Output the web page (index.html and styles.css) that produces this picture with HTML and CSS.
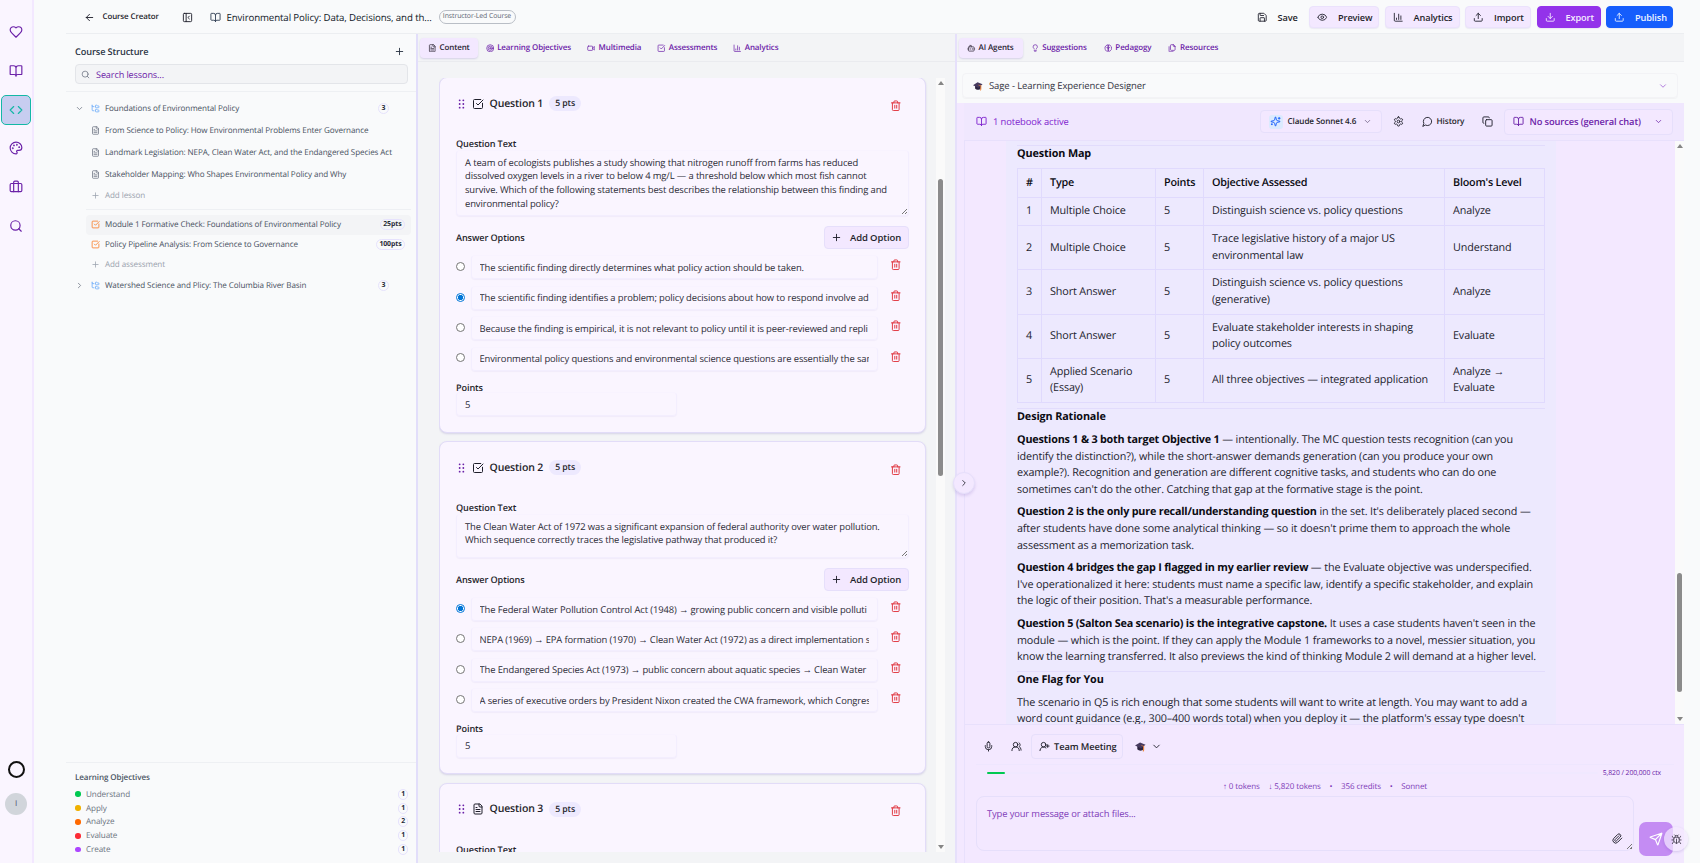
FILE: index.html
```
<!DOCTYPE html>
<html lang="en">
<head>
  <meta charset="UTF-8">
  <title>Course Creator</title>
  <link rel="stylesheet" href="styles.css">
</head>
<body>
  <!-- icon set -->
  <svg class="sprite" aria-hidden="true">
    <symbol id="heart" viewBox="0 0 24 24"><path d="M19 14c1.49-1.46 3-3.21 3-5.5A5.5 5.5 0 0 0 16.5 3c-1.76 0-3 .5-4.5 2-1.5-1.5-2.74-2-4.5-2A5.5 5.5 0 0 0 2 8.500c0 2.300 1.500 4.050 3 5.500l7 7Z"/></symbol>
    <symbol id="book" viewBox="0 0 24 24"><path d="M12 7v14M3 18a1 1 0 0 1-1-1V4a1 1 0 0 1 1-1h5a4 4 0 0 1 4 4 4 4 0 0 1 4-4h5a1 1 0 0 1 1 1v13a1 1 0 0 1-1 1h-6a3 3 0 0 0-3 3 3 3 0 0 0-3-3z"/></symbol>
    <symbol id="code" viewBox="0 0 24 24"><path d="m16 18 6-6-6-6M8 6l-6 6 6 6"/></symbol>
    <symbol id="palette" viewBox="0 0 24 24"><path d="M12 22a1 1 0 0 1 0-20 10 9 0 0 1 10 9 5 5 0 0 1-5 5h-2.250a1.750 1.750 0 0 0-1.400 2.800l.3.400a1.750 1.750 0 0 1-1.400 2.800z"/><circle cx="13.500" cy="6.500" r=".6"/><circle cx="17.500" cy="10.500" r=".6"/><circle cx="6.500" cy="12.500" r=".6"/><circle cx="8.500" cy="7.500" r=".6"/></symbol>
    <symbol id="case" viewBox="0 0 24 24"><path d="M16 20V4a2 2 0 0 0-2-2h-4a2 2 0 0 0-2 2v16"/><rect x="2" y="6" width="20" height="14" rx="2"/></symbol>
    <symbol id="search" viewBox="0 0 24 24"><circle cx="11" cy="11" r="8"/><path d="m21 21-4.300-4.300"/></symbol>
    <symbol id="back" viewBox="0 0 24 24"><path d="m12 19-7-7 7-7M19 12H5"/></symbol>
    <symbol id="panel" viewBox="0 0 24 24"><rect x="3" y="3" width="18" height="18" rx="2"/><path d="M9 3v18m7-6-3-3 3-3"/></symbol>
    <symbol id="plus" viewBox="0 0 24 24"><path d="M5 12h14M12 5v14"/></symbol>
    <symbol id="down" viewBox="0 0 24 24"><path d="m6 9 6 6 6-6"/></symbol>
    <symbol id="right" viewBox="0 0 24 24"><path d="m9 18 6-6-6-6"/></symbol>
    <symbol id="tree" viewBox="0 0 24 24"><path d="M20 10a1 1 0 0 0 1-1V6a1 1 0 0 0-1-1h-2.500a1 1 0 0 1-.8-.4l-.9-1.200A1 1 0 0 0 15 3h-2a1 1 0 0 0-1 1v5a1 1 0 0 0 1 1ZM20 21a1 1 0 0 0 1-1v-3a1 1 0 0 0-1-1h-2.900a1 1 0 0 1-.88-.55l-.42-.85a1 1 0 0 0-.92-.6H13a1 1 0 0 0-1 1v5a1 1 0 0 0 1 1ZM3 5a2 2 0 0 0 2 2h3M3 3v13a2 2 0 0 0 2 2h3"/></symbol>
    <symbol id="file" viewBox="0 0 24 24"><path d="M15 2H6a2 2 0 0 0-2 2v16a2 2 0 0 0 2 2h12a2 2 0 0 0 2-2V7ZM14 2v4a2 2 0 0 0 2 2h4M10 9H8M16 13H8M16 17H8"/></symbol>
    <symbol id="check" viewBox="0 0 24 24"><path d="M21 10.500V19a2 2 0 0 1-2 2H5a2 2 0 0 1-2-2V5a2 2 0 0 1 2-2h12.500M9 11l3 3L22 4"/></symbol>
    <symbol id="target" viewBox="0 0 24 24"><circle cx="12" cy="12" r="10"/><circle cx="12" cy="12" r="6"/><circle cx="12" cy="12" r="2"/></symbol>
    <symbol id="video" viewBox="0 0 24 24"><path d="m16 13 5.200 3.500a.5.500 0 0 0 .8-.4V7.900a.5.500 0 0 0-.75-.4L16 10.500"/><rect x="2" y="6" width="14" height="12" rx="2"/></symbol>
    <symbol id="chart" viewBox="0 0 24 24"><path d="M3 3v16a2 2 0 0 0 2 2h16M18 17V9M13 17V5M8 17v-3"/></symbol>
    <symbol id="grip" viewBox="0 0 24 24"><path d="M8 4h.01M8 12h.01M8 20h.01M16 4h.01M16 12h.01M16 20h.01"/></symbol>
    <symbol id="trash" viewBox="0 0 24 24"><path d="M3 6h18M19 6v14a2 2 0 0 1-2 2H7a2 2 0 0 1-2-2V6M8 6V4a2 2 0 0 1 2-2h4a2 2 0 0 1 2 2v2M10 11v6M14 11v6"/></symbol>
    <symbol id="save" viewBox="0 0 24 24"><path d="M15.200 3a2 2 0 0 1 1.400.6l3.800 3.800a2 2 0 0 1 .6 1.400V19a2 2 0 0 1-2 2H5a2 2 0 0 1-2-2V5a2 2 0 0 1 2-2zM17 21v-7a1 1 0 0 0-1-1H8a1 1 0 0 0-1 1v7M7 3v4a1 1 0 0 0 1 1h7"/></symbol>
    <symbol id="eye" viewBox="0 0 24 24"><path d="M2.060 12.350a1 1 0 0 1 0-.7 10.750 10.750 0 0 1 19.880 0 1 1 0 0 1 0 .7 10.750 10.750 0 0 1-19.880 0"/><circle cx="12" cy="12" r="3"/></symbol>
    <symbol id="upload" viewBox="0 0 24 24"><path d="M21 15v4a2 2 0 0 1-2 2H5a2 2 0 0 1-2-2v-4M17 8l-5-5-5 5M12 3v12"/></symbol>
    <symbol id="download" viewBox="0 0 24 24"><path d="M21 15v4a2 2 0 0 1-2 2H5a2 2 0 0 1-2-2v-4M7 10l5 5 5-5M12 15V3"/></symbol>
    <symbol id="bot" viewBox="0 0 24 24"><path d="M12 8V4H8M2 14h2M20 14h2M15 13v2M9 13v2"/><rect x="4" y="8" width="16" height="12" rx="2"/></symbol>
    <symbol id="bulb" viewBox="0 0 24 24"><path d="M15 14c.2-1 .7-1.700 1.500-2.500 1-.9 1.500-2.200 1.500-3.500A6 6 0 0 0 6 8c0 1 .2 2.200 1.500 3.500.7.700 1.300 1.500 1.500 2.500M9 18h6M10 22h4"/></symbol>
    <symbol id="brain" viewBox="0 0 24 24"><path d="M12 3a4 4 0 0 0-6 2.500 5 5 0 0 0-3 6.500 5 5 0 0 0 2.500 6A4 4 0 0 0 12 20ZM12 3a4 4 0 0 1 6 2.500 5 5 0 0 1 3 6.500 5 5 0 0 1-2.500 6A4 4 0 0 1 12 20ZM8 10c2 0 4 1 4 3 0-2 2-3 4-3"/></symbol>
    <symbol id="files" viewBox="0 0 24 24"><path d="M20 7h-3a2 2 0 0 1-2-2V2M9 18a2 2 0 0 1-2-2V4a2 2 0 0 1 2-2h7l4 4v10a2 2 0 0 1-2 2ZM3 7.600v12.800A1.600 1.600 0 0 0 4.600 22h9.800"/></symbol>
    <symbol id="spark" viewBox="0 0 24 24"><path d="M9.940 15.500A2 2 0 0 0 8.500 14.060l-6.140-1.580a.5.500 0 0 1 0-.96L8.500 9.940A2 2 0 0 0 9.940 8.500l1.580-6.140a.5.500 0 0 1 .96 0L14.060 8.500A2 2 0 0 0 15.500 9.940l6.140 1.580a.5.500 0 0 1 0 .96L15.500 14.060a2 2 0 0 0-1.440 1.440l-1.580 6.140a.5.500 0 0 1-.96 0zM20 3v4M22 5h-4M4 17v2M5 18H3"/></symbol>
    <symbol id="gear" viewBox="0 0 24 24"><path d="M12.220 2h-.44a2 2 0 0 0-2 2v.18a2 2 0 0 1-1 1.730l-.43.250a2 2 0 0 1-2 0l-.15-.08a2 2 0 0 0-2.730.730l-.22.380a2 2 0 0 0 .730 2.730l.15.100a2 2 0 0 1 1 1.720v.510a2 2 0 0 1-1 1.740l-.15.090a2 2 0 0 0-.730 2.730l.22.380a2 2 0 0 0 2.730.730l.15-.08a2 2 0 0 1 2 0l.43.250a2 2 0 0 1 1 1.730V20a2 2 0 0 0 2 2h.44a2 2 0 0 0 2-2v-.18a2 2 0 0 1 1-1.730l.43-.25a2 2 0 0 1 2 0l.15.080a2 2 0 0 0 2.730-.730l.22-.390a2 2 0 0 0-.730-2.730l-.15-.08a2 2 0 0 1-1-1.740v-.5a2 2 0 0 1 1-1.740l.15-.09a2 2 0 0 0 .730-2.730l-.22-.380a2 2 0 0 0-2.730-.730l-.15.080a2 2 0 0 1-2 0l-.43-.25a2 2 0 0 1-1-1.730V4a2 2 0 0 0-2-2z"/><circle cx="12" cy="12" r="3"/></symbol>
    <symbol id="bubble" viewBox="0 0 24 24"><path d="M7.900 20A9 9 0 1 0 4 16.100L2 22Z"/></symbol>
    <symbol id="copy" viewBox="0 0 24 24"><rect x="8" y="8" width="14" height="14" rx="2"/><path d="M4 16c-1.100 0-2-.9-2-2V4c0-1.100.9-2 2-2h10c1.100 0 2 .9 2 2"/></symbol>
    <symbol id="mic" viewBox="0 0 24 24"><path d="M12 2a3 3 0 0 0-3 3v7a3 3 0 0 0 6 0V5a3 3 0 0 0-3-3ZM19 10v2a7 7 0 0 1-14 0v-2M12 19v3"/></symbol>
    <symbol id="users" viewBox="0 0 24 24"><path d="M18 21a8 8 0 0 0-16 0M22 20c0-3.370-2-6.500-4-8a5 5 0 0 0-.45-8.300"/><circle cx="10" cy="8" r="5"/></symbol>
    <symbol id="useradd" viewBox="0 0 24 24"><path d="M2 21a8 8 0 0 1 13.290-6M19 8v6M22 11h-6"/><circle cx="10" cy="8" r="5"/></symbol>
    <symbol id="clip" viewBox="0 0 24 24"><path d="m21.440 11.050-9.190 9.190a6 6 0 0 1-8.490-8.490l8.570-8.570A4 4 0 1 1 18 8.840l-8.590 8.570a2 2 0 0 1-2.830-2.830l8.490-8.480"/></symbol>
    <symbol id="send" viewBox="0 0 24 24"><path d="M14.540 21.690a.5.500 0 0 0 .94-.03l6.500-19a.5.500 0 0 0-.64-.64l-19 6.500a.5.500 0 0 0-.02.940l7.930 3.180a2 2 0 0 1 1.110 1.110zM21.850 2.150l-10.940 10.940"/></symbol>
    <symbol id="bug" viewBox="0 0 24 24"><path d="m8 2 1.880 1.880M14.120 3.880 16 2M9 7.130v-1a3 3 0 1 1 6 0v1M12 20c-3.300 0-6-2.700-6-6v-3a4 4 0 0 1 4-4h4a4 4 0 0 1 4 4v3c0 3.300-2.700 6-6 6M12 20v-9M6.530 9C4.600 8.800 3 7.100 3 5M6 13H2M3 21c0-2.100 1.700-3.900 3.800-4M20.970 5c0 2.100-1.600 3.800-3.500 4M22 13h-4M17.200 17c2.100.1 3.800 1.900 3.800 4"/></symbol>
    <symbol id="cap" viewBox="0 0 24 24"><g stroke="none"><path fill="#2c2440" d="M5 11v7c3 4 11 4 14 0v-8z"/><path fill="#463a5e" d="M0 10 11 3l12 5-10 8z"/><path fill="#f0883e" d="m13 9 7 2v9l-1 3h-2l1-11-5-2z"/></g></symbol>
  </svg>

  <div class="app">
    <nav class="rail">
      <a class="rail-item"><svg><use href="#heart"/></svg></a>
      <a class="rail-item"><svg><use href="#book"/></svg></a>
      <a class="rail-item active"><svg><use href="#code"/></svg></a>
      <a class="rail-item"><svg><use href="#palette"/></svg></a>
      <a class="rail-item"><svg><use href="#case"/></svg></a>
      <a class="rail-item"><svg><use href="#search"/></svg></a>
      <span class="ring"></span>
      <span class="avatar">I</span>
    </nav>

    <main class="main">
      <header class="topbar">
        <svg class="i11"><use href="#back"/></svg>
        <span class="back-label">Course Creator</span>
        <svg class="i11 panel-icon"><use href="#panel"/></svg>
        <svg class="i11 book-icon"><use href="#book"/></svg>
        <span class="course-title">Environmental Policy: Data, Decisions, and th...</span>
        <span class="course-type">Instructor-Led Course</span>
        <div class="actions">
          <button class="btn ghost"><svg><use href="#save"/></svg>Save</button>
          <button class="btn preview"><svg><use href="#eye"/></svg>Preview</button>
          <button class="btn stats"><svg><use href="#chart"/></svg>Analytics</button>
          <button class="btn import"><svg><use href="#upload"/></svg>Import</button>
          <button class="btn export"><svg><use href="#download"/></svg>Export</button>
          <button class="btn publish"><svg><use href="#upload"/></svg>Publish</button>
        </div>
      </header>

      <div class="columns">
        <!-- course structure -->
        <aside class="structure">
          <div class="structure-head">
            <div class="structure-title">Course Structure <svg class="i11"><use href="#plus"/></svg></div>
            <div class="search"><svg><use href="#search"/></svg>Search lessons...</div>
          </div>
          <div class="tree">
            <div class="node module"><svg class="chev"><use href="#down"/></svg><svg class="blue"><use href="#tree"/></svg><span>Foundations of Environmental Policy</span><b class="pill">3</b></div>
            <div class="node lesson"><svg><use href="#file"/></svg><span>From Science to Policy: How Environmental Problems Enter Governance</span></div>
            <div class="node lesson"><svg><use href="#file"/></svg><span>Landmark Legislation: NEPA, Clean Water Act, and the Endangered Species Act</span></div>
            <div class="node lesson"><svg><use href="#file"/></svg><span>Stakeholder Mapping: Who Shapes Environmental Policy and Why</span></div>
            <div class="node add"><svg><use href="#plus"/></svg><span>Add lesson</span></div>
            <div class="tests">
              <div class="node test selected"><svg class="orange"><use href="#check"/></svg><span>Module 1 Formative Check: Foundations of Environmental Policy</span><b class="pill">25pts</b></div>
              <div class="node test"><svg class="orange"><use href="#check"/></svg><span>Policy Pipeline Analysis: From Science to Governance</span><b class="pill">100pts</b></div>
              <div class="node add"><svg><use href="#plus"/></svg><span>Add assessment</span></div>
            </div>
            <div class="node module"><svg class="chev"><use href="#right"/></svg><svg class="blue"><use href="#tree"/></svg><span>Watershed Science and Plicy: The Columbia River Basin</span><b class="pill">3</b></div>
          </div>
          <div class="objectives">
            <h4>Learning Objectives</h4>
            <div class="objective"><i class="dot green"></i>Understand<b class="pill">1</b></div>
            <div class="objective"><i class="dot yellow"></i>Apply<b class="pill">1</b></div>
            <div class="objective"><i class="dot amber"></i>Analyze<b class="pill">2</b></div>
            <div class="objective"><i class="dot red"></i>Evaluate<b class="pill">1</b></div>
            <div class="objective"><i class="dot violet"></i>Create<b class="pill">1</b></div>
          </div>
        </aside>

        <!-- assessment editor -->
        <section class="editor">
          <div class="tabs">
            <span class="tab active"><svg><use href="#file"/></svg>Content</span>
            <span class="tab"><svg><use href="#target"/></svg>Learning Objectives</span>
            <span class="tab"><svg><use href="#video"/></svg>Multimedia</span>
            <span class="tab"><svg><use href="#check"/></svg>Assessments</span>
            <span class="tab"><svg><use href="#chart"/></svg>Analytics</span>
          </div>
          <div class="editor-scroll">
            <div class="cards">
              <article class="card">
                <div class="card-head"><svg class="grip"><use href="#grip"/></svg><svg class="kind"><use href="#check"/></svg><h3>Question 1</h3><span class="pts">5 pts</span><svg class="trash"><use href="#trash"/></svg></div>
                <label>Question Text</label>
                <div class="field area">A team of ecologists publishes a study showing that nitrogen runoff from farms has reduced<br>dissolved oxygen levels in a river to below 4 mg/L — a threshold below which most fish cannot<br>survive. Which of the following statements best describes the relationship between this finding and<br>environmental policy?<i class="grab"></i></div>
                <div class="options-head"><label>Answer Options</label><button class="add-option"><svg><use href="#plus"/></svg>Add Option</button></div>
                <div class="option"><i class="radio"></i><div class="field"><p>The scientific finding directly determines what policy action should be taken.</p></div><svg class="trash"><use href="#trash"/></svg></div>
                <div class="option"><i class="radio on"></i><div class="field"><p>The scientific finding identifies a problem; policy decisions about how to respond involve ad</p></div><svg class="trash"><use href="#trash"/></svg></div>
                <div class="option"><i class="radio"></i><div class="field"><p>Because the finding is empirical, it is not relevant to policy until it is peer-reviewed and repli</p></div><svg class="trash"><use href="#trash"/></svg></div>
                <div class="option"><i class="radio"></i><div class="field"><p>Environmental policy questions and environmental science questions are essentially the sam</p></div><svg class="trash"><use href="#trash"/></svg></div>
                <label class="points-label">Points</label>
                <div class="field points">5</div>
              </article>

              <article class="card">
                <div class="card-head"><svg class="grip"><use href="#grip"/></svg><svg class="kind"><use href="#check"/></svg><h3>Question 2</h3><span class="pts">5 pts</span><svg class="trash"><use href="#trash"/></svg></div>
                <label>Question Text</label>
                <div class="field area">The Clean Water Act of 1972 was a significant expansion of federal authority over water pollution.<br>Which sequence correctly traces the legislative pathway that produced it?<i class="grab"></i></div>
                <div class="options-head"><label>Answer Options</label><button class="add-option"><svg><use href="#plus"/></svg>Add Option</button></div>
                <div class="option"><i class="radio on"></i><div class="field"><p>The Federal Water Pollution Control Act (1948) → growing public concern and visible polluti</p></div><svg class="trash"><use href="#trash"/></svg></div>
                <div class="option"><i class="radio"></i><div class="field"><p>NEPA (1969) → EPA formation (1970) → Clean Water Act (1972) as a direct implementation s</p></div><svg class="trash"><use href="#trash"/></svg></div>
                <div class="option"><i class="radio"></i><div class="field"><p>The Endangered Species Act (1973) → public concern about aquatic species → Clean Water</p></div><svg class="trash"><use href="#trash"/></svg></div>
                <div class="option"><i class="radio"></i><div class="field"><p>A series of executive orders by President Nixon created the CWA framework, which Congres</p></div><svg class="trash"><use href="#trash"/></svg></div>
                <label class="points-label">Points</label>
                <div class="field points">5</div>
              </article>

              <article class="card">
                <div class="card-head"><svg class="grip"><use href="#grip"/></svg><svg class="kind"><use href="#file"/></svg><h3>Question 3</h3><span class="pts">5 pts</span><svg class="trash"><use href="#trash"/></svg></div>
                <label>Question Text</label>
                <div class="field area"></div>
              </article>
            </div>
            <div class="scrollbar"><i class="up"></i><i class="thumb"></i><i class="dn"></i></div>
          </div>
        </section>

        <!-- AI panel -->
        <section class="assistant">
          <div class="tabs">
            <span class="tab active"><svg><use href="#bot"/></svg>AI Agents</span>
            <span class="tab"><svg><use href="#bulb"/></svg>Suggestions</span>
            <span class="tab"><svg><use href="#brain"/></svg>Pedagogy</span>
            <span class="tab"><svg><use href="#files"/></svg>Resources</span>
          </div>
          <div class="agent-row">
            <div class="agent"><svg><use href="#cap"/></svg>Sage - Learning Experience Designer<svg class="end"><use href="#down"/></svg></div>
          </div>
          <div class="chat">
            <div class="chat-head">
              <svg class="i11 nb-icon"><use href="#book"/></svg><span class="notebook">1 notebook active</span>
              <div class="model"><span class="spark"><svg><use href="#spark"/></svg></span>Claude Sonnet 4.6<svg><use href="#down"/></svg></div>
              <svg class="i11 gear"><use href="#gear"/></svg>
              <span class="history"><svg class="i11"><use href="#bubble"/></svg>History</span>
              <svg class="i11 copy"><use href="#copy"/></svg>
              <div class="sources"><svg class="i11"><use href="#book"/></svg>No sources (general chat)<svg class="end"><use href="#down"/></svg></div>
            </div>
            <div class="messages">
              <div class="message">
                <hr>
                <h3>Question Map</h3>
                <table>
                  <tr><th class="c1">#</th><th class="c2">Type</th><th class="c3">Points</th><th class="c4">Objective Assessed</th><th>Bloom's Level</th></tr>
                  <tr><td>1</td><td>Multiple Choice</td><td>5</td><td>Distinguish science vs. policy questions</td><td>Analyze</td></tr>
                  <tr><td>2</td><td>Multiple Choice</td><td>5</td><td>Trace legislative history of a major US<br>environmental law</td><td>Understand</td></tr>
                  <tr><td>3</td><td>Short Answer</td><td>5</td><td>Distinguish science vs. policy questions<br>(generative)</td><td>Analyze</td></tr>
                  <tr><td>4</td><td>Short Answer</td><td>5</td><td>Evaluate stakeholder interests in shaping<br>policy outcomes</td><td>Evaluate</td></tr>
                  <tr><td>5</td><td>Applied Scenario<br>(Essay)</td><td>5</td><td>All three objectives — integrated application</td><td>Analyze →<br>Evaluate</td></tr>
                </table>
                <hr>
                <h3>Design Rationale</h3>
                <p><b>Questions 1 &amp; 3 both target Objective 1</b> — intentionally. The MC question tests recognition (can you<br>identify the distinction?), while the short-answer demands generation (can you produce your own<br>example?). Recognition and generation are different cognitive tasks, and students who can do one<br>sometimes can't do the other. Catching that gap at the formative stage is the point.</p>
                <p><b>Question 2 is the only pure recall/understanding question</b> in the set. It's deliberately placed second —<br>after students have done some analytical thinking — so it doesn't prime them to approach the whole<br>assessment as a memorization task.</p>
                <p><b>Question 4 bridges the gap I flagged in my earlier review</b> — the Evaluate objective was underspecified.<br>I've operationalized it here: students must name a specific law, identify a specific stakeholder, and explain<br>the logic of their position. That's a measurable performance.</p>
                <p><b>Question 5 (Salton Sea scenario) is the integrative capstone.</b> It uses a case students haven't seen in the<br>module — which is the point. If they can apply the Module 1 frameworks to a novel, messier situation, you<br>know the learning transferred. It also previews the kind of thinking Module 2 will demand at a higher level.</p>
                <hr>
                <h3>One Flag for You</h3>
                <p>The scenario in Q5 is rich enough that some students will want to write at length. You may want to add a<br>word count guidance (e.g., 300–400 words total) when you deploy it — the platform's essay type doesn't</p>
              </div>
              <div class="scrollbar"><i class="up"></i><i class="thumb"></i><i class="dn"></i></div>
            </div>
            <div class="composer">
              <div class="tools">
                <svg class="i11"><use href="#mic"/></svg>
                <svg class="i11"><use href="#users"/></svg>
                <span class="team"><svg class="i11"><use href="#useradd"/></svg>Team Meeting</span>
                <svg class="i11 cap"><use href="#cap"/></svg>
                <svg class="i11 tools-chev"><use href="#down"/></svg>
              </div>
              <div class="usage"><div class="meter"><i></i></div><span>5,820 / 200,000 ctx</span></div>
              <div class="tokens"><span>↑ 0 tokens</span><span>↓ 5,820 tokens</span><span>•</span><span>356 credits</span><span>•</span><span>Sonnet</span></div>
              <div class="input-row">
                <div class="prompt">Type your message or attach files...<svg><use href="#clip"/></svg><i class="grab"></i></div>
                <button class="send"><svg><use href="#send"/></svg></button>
              </div>
            </div>
            <span class="collapse"><svg><use href="#right"/></svg></span>
          </div>
        </section>
      </div>
    </main>
    <span class="bug"><svg><use href="#bug"/></svg></span>
  </div>
</body>
</html>
```
FILE: styles.css
```
* {
  box-sizing: border-box;
  letter-spacing: -0.012em;
}
body {
  margin: 0;
  font-family: "Open Sans", "Noto Sans", sans-serif;
  font-size: 9.3px;
  color: #1f1f2b;
  background: #f9fafb;
  text-rendering: geometricPrecision;
  overflow: hidden;
}
h3, h4, p {
  margin: 0;
}
button {
  font-family: inherit;
}
svg {
  flex: none;
  display: block;
  fill: none;
  stroke: currentColor;
  stroke-width: 2;
  stroke-linecap: round;
  stroke-linejoin: round;
}
.sprite {
  position: absolute;
  width: 0;
  height: 0;
}
.i11 {
  width: 11px;
  height: 11px;
}

.app {
  position: relative;
  display: flex;
  height: 863px;
}

/* Left rail */
.rail {
  width: 34px;
  flex: none;
  display: flex;
  flex-direction: column;
  align-items: center;
  padding: 17px 0 48px;
  background: #faf5ff;
  border-right: 2px solid #f3e8ff;
  color: #6b21a8;
}
.rail-item {
  width: 30px;
  height: 30px;
  margin-bottom: 8.800px;
  display: flex;
  align-items: center;
  justify-content: center;
}
.rail-item svg {
  width: 14px;
  height: 14px;
}
.rail-item.active {
  background: #c7cdf0;
  border: 1.5px solid #14b8a6;
  border-radius: 5px;
  color: #14b8a6;
}
.ring {
  width: 17px;
  height: 17px;
  margin-top: auto;
  border: 2px solid #111;
  border-radius: 50%;
}
.avatar {
  width: 22px;
  height: 22px;
  margin-top: 15px;
  border-radius: 50%;
  background: #d1d5db;
  color: #4c4a6b;
  font-size: 8px;
  text-align: center;
  line-height: 22px;
}

.main {
  width: 1618px;
  margin-left: 32px;
  display: flex;
  flex-direction: column;
}

/* Top bar */
.topbar {
  height: 34px;
  flex: none;
  display: flex;
  align-items: center;
  padding: 1px 11px 0 18px;
  border-bottom: 1px solid #eceef1;
}
.back-label {
  width: 56px;
  margin-left: 7.500px;
  font-size: 7.900px;
  font-weight: 600;
  white-space: nowrap;
}
.panel-icon {
  margin-left: 23.500px;
}
.book-icon {
  margin-left: 16.500px;
  color: #334155;
}
.course-title {
  width: 206px;
  margin-left: 6px;
  font-size: 9.700px;
  font-weight: 500;
  color: #111827;
  white-space: nowrap;
}
.course-type {
  width: 77px;
  height: 14px;
  margin-left: 6px;
  border: 1px solid #b9bec6;
  border-radius: 7px;
  font-size: 6.900px;
  font-weight: 500;
  line-height: 12.500px;
  text-align: center;
  color: #5b6472;
  white-space: nowrap;
}
.actions {
  margin-left: auto;
  display: flex;
  gap: 5.500px;
}
.btn {
  height: 22px;
  display: flex;
  align-items: center;
  gap: 10.500px;
  padding: 0 0 0 7px;
  border: 1px solid #ebe2fc;
  border-radius: 4px;
  background: #f3e8ff;
  box-shadow: 0 1px 1px rgba(80, 50, 160, 0.08);
  font-size: 9.200px;
  font-weight: 600;
  color: #1f1f2b;
  white-space: nowrap;
}
.btn svg {
  width: 10.500px;
  height: 10.500px;
}
.btn.ghost {
  width: 55px;
  border-color: transparent;
  background: none;
  box-shadow: none;
}
.btn.preview { width: 70px; }
.btn.stats { width: 75px; }
.btn.import { width: 66px; }
.btn.export {
  width: 64px;
  background: #9333ea;
  border-color: #9333ea;
  color: #f5ecff;
}
.btn.publish {
  width: 67px;
  background: #155dfc;
  border-color: #155dfc;
  color: #eef4ff;
}

.columns {
  flex: 1;
  min-height: 0;
  display: flex;
}

/* Course structure */
.structure {
  width: 352px;
  flex: none;
  display: flex;
  flex-direction: column;
  border-right: 2px solid #e2defa;
}
.structure-head {
  height: 58px;
  flex: none;
  padding: 9px 8px 0 9px;
  border-bottom: 1px solid #eef0f3;
}
.structure-title {
  height: 16px;
  display: flex;
  align-items: center;
  justify-content: space-between;
  padding-right: 3.500px;
  font-size: 9.200px;
  font-weight: 600;
  color: #2b3444;
}
.search {
  height: 20px;
  margin-top: 5px;
  display: flex;
  align-items: center;
  gap: 6px;
  padding-left: 5px;
  border: 1px solid #e3e5e9;
  border-radius: 4px;
  background: #f3f4f6;
  font-size: 9.100px;
  color: #6b21a8;
}
.search svg {
  width: 9px;
  height: 9px;
  color: #6b7280;
}
.tree {
  flex: 1;
  padding: 5px 5px 0 8px;
}
.node {
  height: 22px;
  display: flex;
  align-items: center;
  font-size: 8.080px;
  color: #475060;
  white-space: nowrap;
}
.node svg {
  width: 9px;
  height: 9px;
  color: #6b7280;
}
.node span {
  margin-left: 5px;
}
.node .chev {
  width: 9px;
  height: 9px;
  margin: 0 7.500px 0 .5px;
}
.node .blue { color: #60a5fa; }
.node .orange { color: #f97316; }
.node.lesson {
  padding-left: 17px;
}
.node.add {
  height: 20px;
  padding-left: 17px;
  color: #9aa1ad;
}
.node.add svg {
  color: #9aa1ad;
}
.node.module .pill {
  margin-left: auto;
  margin-right: 22px;
}
.pill {
  min-width: 11px;
  height: 11px;
  padding: 0 2px;
  border: 1px solid #e6e2fd;
  border-radius: 6px;
  font-size: 6.900px;
  font-weight: 700;
  line-height: 9px;
  text-align: center;
  color: #1f2937;
}
.tests {
  margin: 4px 0 0 12px;
  padding-top: 5px;
  border-top: 1px solid #eef0f3;
}
.node.test {
  height: 19.500px;
  padding: 0 6px 0 5px;
  border-radius: 4px;
}
.node.test .pill {
  margin-left: auto;
  padding: 0 2.500px;
}
.node.selected {
  background: #f3f4f6;
}
.tests .add {
  height: 21px;
  margin-bottom: -1px;
  padding-left: 5px;
}
.objectives {
  height: 101px;
  padding: 8px 8px 0 9px;
  border-top: 1px solid #eef0f3;
}
.objectives h4 {
  height: 16.300px;
  font-size: 8.050px;
  font-weight: 600;
  line-height: 14px;
  color: #4b5563;
}
.objective {
  height: 13.850px;
  display: flex;
  align-items: center;
  font-size: 8.150px;
  color: #6b7280;
}
.objective .pill {
  margin-left: auto;
  min-width: 9.500px;
}
.dot {
  width: 5.500px;
  height: 5.500px;
  margin-right: 5.500px;
  border-radius: 50%;
}
.green { background: #00c951; }
.yellow { background: #f0b100; }
.amber { background: #ff6900; }
.red { background: #fb2c36; }
.violet { background: #ad46ff; }

/* Tabs */
.tabs {
  height: 28px;
  flex: none;
  display: flex;
  align-items: center;
  padding: 1px 2px 0;
  border-bottom: 1px solid #eaebef;
  background: #f3f4f6;
}
.tab {
  height: 20px;
  display: flex;
  align-items: center;
  gap: 3px;
  padding: 0 8px;
  border-radius: 4px;
  font-size: 7.950px;
  font-weight: 600;
  color: #6b21a8;
  white-space: nowrap;
}
.tab svg {
  width: 8.500px;
  height: 8.500px;
}
.assistant .tab {
  padding-right: 9px;
}
.tab.active {
  background: #f3e8ff;
  box-shadow: 0 1px 2px rgba(80, 50, 160, 0.18);
  color: #2a2433;
}

/* Editor */
.editor {
  width: 537px;
  flex: none;
  display: flex;
  flex-direction: column;
  background: #f3f4f6;
}
.editor-scroll {
  height: 774px;
  margin: 16px 10px 0 21px;
  display: flex;
  justify-content: space-between;
  overflow: hidden;
}
.cards {
  width: 487px;
  margin-top: -1px;
}
.card {
  padding: 17px 16px 15.500px;
  margin-bottom: 8.500px;
  border: 1px solid #e2dcf8;
  border-radius: 8px;
  background: #faf5ff;
  box-shadow: 0 1px 2px rgba(80, 60, 160, 0.18);
}
.card-head {
  height: 17px;
  margin-bottom: 25px;
  display: flex;
  align-items: center;
}
.card-head .grip {
  width: 11px;
  height: 12px;
  color: #6b21a8;
  stroke-width: 4;
}
.card-head .kind {
  width: 12px;
  height: 12px;
  margin: 0 5.500px 0 5px;
}
.card-head h3 {
  font-size: 10.500px;
  font-weight: 600;
}
.pts {
  height: 15px;
  margin-left: 6px;
  padding: 0 6px;
  border-radius: 8px;
  background: #ede9fe;
  font-size: 8.700px;
  font-weight: 600;
  line-height: 15px;
}
.trash {
  width: 11.500px;
  height: 11.500px;
  color: #e0323c;
}
.card-head .trash {
  margin: 4px 7.500px 0 auto;
}
label {
  display: block;
  height: 13px;
  font-size: 9.150px;
  font-weight: 600;
  line-height: 13px;
}
.field {
  border: 1px solid #f3eefe;
  border-top-color: #f8f3ff;
  border-radius: 4px;
  box-shadow: 0 1px 1px rgba(80, 60, 160, 0.05);
  font-size: 9.420px;
  line-height: 13.850px;
  color: #2b2b36;
  white-space: nowrap;
}
.area {
  position: relative;
  min-height: 44px;
  padding: 4.500px 8px 4.500px;
}
.grab {
  position: absolute;
  right: 1px;
  bottom: 1px;
  width: 5px;
  height: 5px;
  background: linear-gradient(135deg, transparent 45%, #777 45% 58%, transparent 58% 75%, #777 75% 90%, transparent 90%);
}
.options-head {
  height: 23px;
  margin: 10px 0 6px;
  display: flex;
  align-items: center;
  justify-content: space-between;
}
.add-option {
  width: 85px;
  height: 23px;
  display: flex;
  align-items: center;
  gap: 8px;
  padding: 0 0 0 6px;
  border: 1px solid #e6dffb;
  border-radius: 4px;
  background: #f3e8ff;
  font-size: 9.500px;
  font-weight: 600;
  color: #1f1f2b;
  white-space: nowrap;
}
.add-option svg {
  width: 11px;
  height: 11px;
}
.option {
  height: 24px;
  margin-bottom: 6.400px;
  display: flex;
  align-items: center;
}
.option .field {
  width: 407px;
  height: 24px;
  margin-left: 5.500px;
  padding: 4.500px 8px;
}
.option .field p {
  overflow: hidden;
}
.option .trash {
  margin: 0 7.500px 4.500px auto;
}
.radio {
  width: 9px;
  height: 9px;
  margin-bottom: 1.500px;
  border: 1px solid #767676;
  border-radius: 50%;
  background: #fff;
}
.radio.on {
  border-color: #0075d7;
  background: radial-gradient(circle, #0075d7 0 2.400px, #fff 3px);
}
.points-label {
  margin-top: 10px;
  height: 11.500px;
}
.points {
  width: 221px;
  height: 24px;
  padding: 4.500px 8px;
}

/* Scrollbars */
.scrollbar {
  width: 9px;
  flex: none;
  display: flex;
  flex-direction: column;
  align-items: center;
  background: #fafafa;
}
.scrollbar i {
  width: 5px;
}
.scrollbar .up,
.scrollbar .dn {
  height: 0;
  width: 0;
  border: 3px solid transparent;
  border-top-width: 0;
  border-bottom: 4px solid #858585;
  margin-top: 3px;
}
.scrollbar .dn {
  border-bottom: 0;
  border-top: 4px solid #858585;
  margin: auto 0 3px;
}
.scrollbar .thumb {
  height: 297px;
  margin-top: 94px;
  border-radius: 3px;
  background: #8b8b8b;
}
.messages .thumb {
  height: 119px;
  margin-top: 425px;
}

/* Assistant */
.assistant {
  width: 729px;
  flex: none;
  display: flex;
  flex-direction: column;
  border-left: 2px solid #e6e0fb;
}
.agent-row {
  height: 41px;
  flex: none;
  padding: 11px 6px 0 5px;
}
.agent {
  height: 25px;
  display: flex;
  align-items: center;
  gap: 6.500px;
  padding: 0 9px 0 9.500px;
  border: 1px solid #f3f3f6;
  border-radius: 4px;
  box-shadow: 0 1px 1px rgba(0, 0, 0, 0.03);
  font-size: 9.500px;
  color: #33333f;
}
.agent svg {
  width: 10px;
  height: 10px;
}
.agent .end {
  margin-left: auto;
  color: #a566d8;
}
.chat {
  position: relative;
  flex: 1;
  min-height: 0;
  display: flex;
  flex-direction: column;
  border-left: 7px solid #f3e8ff;
  background: #f3e8ff;
  box-shadow: inset 1px 0 0 #e8e0fc;
}
.chat-head {
  height: 38px;
  flex: none;
  display: flex;
  align-items: center;
  padding: 0 11px 0 12px;
  border-bottom: 1px solid #e8e0fc;
  background: #f0e7fe;
  color: #1f1f2b;
}
.nb-icon,
.notebook {
  color: #7e22ce;
}
.notebook {
  margin-left: 6px;
  font-size: 9.400px;
}
.model {
  width: 122px;
  height: 23px;
  margin-left: auto;
  display: flex;
  align-items: center;
  gap: 5px;
  padding: 0 9px 0 8px;
  border: 1px solid #e6dffb;
  border-radius: 4px;
  background: #f3e8ff;
  font-size: 8.150px;
  font-weight: 600;
  white-space: nowrap;
}
.model > svg {
  width: 9px;
  height: 9px;
  margin-left: auto;
  color: #6b5c80;
}
.spark {
  width: 14px;
  height: 14px;
  padding: 1.500px;
  border-radius: 3px;
  background: #dbeafe;
  color: #155dfc;
}
.spark svg {
  width: 11px;
  height: 11px;
}
.gear {
  margin-left: 11px;
}
.history {
  width: 43px;
  margin-left: 18px;
  display: flex;
  align-items: center;
  gap: 4px;
  font-size: 8.200px;
  font-weight: 600;
}
.copy {
  margin: 0 11px 0 17.500px;
}
.sources {
  width: 169px;
  height: 26px;
  display: flex;
  align-items: center;
  gap: 5.500px;
  padding: 0 9px 0 8px;
  border: 1px solid #e6dffb;
  border-radius: 4px;
  background: #f3e8ff;
  font-size: 9.300px;
  font-weight: 600;
  color: #6b21a8;
  white-space: nowrap;
}
.sources .end {
  width: 9px;
  height: 9px;
  margin-left: auto;
}
.messages {
  height: 583px;
  flex: none;
  display: flex;
  justify-content: space-between;
  overflow: hidden;
}
.message {
  width: 550px;
  margin-left: 42px;
  padding: 4px 11px 0;
  background: #ede9fe;
  font-size: 10.800px;
  line-height: 16.600px;
  color: #24242e;
  white-space: nowrap;
}
.message hr {
  height: 1px;
  margin: 0;
  border: 0;
  background: #e2dcfc;
}
.message h3 {
  height: 17px;
  font-size: 10.820px;
  font-weight: 700;
  line-height: 16.500px;
  color: #0b0b12;
}
.message b {
  font-weight: 700;
  color: #0b0b12;
  letter-spacing: -0.019em;
}
.message p {
  margin-top: 6px;
}
.message p + hr {
  margin-top: 5px;
}
.message table {
  width: 528px;
  margin: 5px 0 5px;
  table-layout: fixed;
  border-collapse: collapse;
}
.message th,
.message td {
  height: 28.300px;
  padding: 5px 8px;
  border: 1px solid #e0dafd;
  text-align: left;
  vertical-align: middle;
}
.message th {
  height: 29px;
  font-weight: 600;
  color: #0b0b12;
  letter-spacing: -0.02em;
}
.c1 { width: 24px; }
.c2 { width: 114px; }
.c3 { width: 48px; }
.c4 { width: 241px; }

/* Composer */
.composer {
  flex: 1;
  min-height: 0;
  padding: 8.500px 10px 0 12px;
  border-top: 1px solid #e8e0fc;
}
.tools {
  height: 31px;
  display: flex;
  align-items: flex-start;
  padding-left: 7px;
  border-bottom: 1px solid #eee6fe;
}
.tools > svg {
  margin-top: 7px;
  margin-right: 17px;
}
.tools > svg + svg {
  margin-right: 9px;
}
.team {
  width: 92px;
  height: 25px;
  display: flex;
  align-items: center;
  gap: 4px;
  padding-left: 7px;
  border: 1px solid #e6dffb;
  border-radius: 4px;
  font-size: 9.300px;
  font-weight: 600;
  white-space: nowrap;
}
.tools .cap {
  margin-left: 11.500px;
  margin-right: 5px;
}
.usage {
  height: 15.500px;
  display: flex;
  align-items: center;
  gap: 5px;
  padding: 2px 13px 0 11px;
  font-size: 6.850px;
  color: #6b21a8;
}
.meter {
  flex: 1;
  height: 2px;
  border-radius: 1px;
  background: #f0e8ff;
}
.meter i {
  display: block;
  width: 18px;
  height: 2px;
  border-radius: 1px;
  background: #00c951;
}
.tokens {
  height: 13px;
  margin-bottom: 3px;
  display: flex;
  align-items: center;
  justify-content: center;
  gap: 8.700px;
  font-size: 8px;
  color: #7e3bb8;
}
.input-row {
  display: flex;
  gap: 5px;
}
.prompt {
  position: relative;
  width: 658px;
  height: 55px;
  padding: 9.500px 10px;
  border: 1px solid #e6dffb;
  border-radius: 8px;
  font-size: 9.350px;
  line-height: 14px;
  color: #7e3bb8;
}
.prompt svg {
  position: absolute;
  right: 10.500px;
  bottom: 6.500px;
  width: 11px;
  height: 11px;
  color: #1f1f2b;
}
.send {
  width: 34px;
  height: 34px;
  margin-top: 25.500px;
  padding: 0;
  display: flex;
  align-items: center;
  justify-content: center;
  border: 0;
  border-radius: 7px;
  background: #c48cf3;
  color: #fff;
}
.send svg {
  width: 14px;
  height: 14px;
}
.collapse {
  position: absolute;
  left: -11px;
  top: 369px;
  width: 22px;
  height: 22px;
  padding: 5px;
  border: 1px solid #e6dffb;
  border-radius: 50%;
  background: #f3e8ff;
  box-shadow: 0 2px 3px rgba(80, 50, 160, 0.15);
}
.collapse svg {
  width: 10px;
  height: 10px;
}
.bug {
  position: absolute;
  left: 1664px;
  top: 827px;
  width: 24px;
  height: 24px;
  padding: 6.500px;
  border-radius: 50%;
  background: rgba(243, 232, 255, 0.7);
  box-shadow: 0 1px 3px rgba(80, 50, 160, 0.2);
  color: #4a4356;
}
.bug svg {
  width: 11px;
  height: 11px;
}
```
